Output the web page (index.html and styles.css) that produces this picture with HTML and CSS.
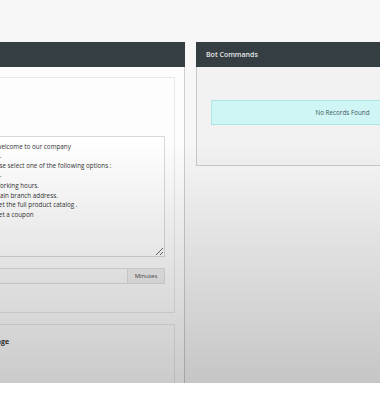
FILE: index.html
```html
<!DOCTYPE html>
<html>
<head>
<meta charset="utf-8">
<link rel="stylesheet" href="styles.css">
</head>
<body>
<div class="frame">
  <div class="row">
    <section class="panel panel-left">
      <div class="panel-head"><span>Auto Reply</span></div>
      <div class="panel-body">
        <div class="card card-form">
          <textarea class="msg" readonly>Hi, welcome to our company
-------
Please select one of the following options :
-------
1- Working hours.
2- Main branch address.
3- Get the full product catalog .
4- Get a coupon</textarea>
          <div class="input-group">
            <input class="input" type="text" value="">
            <span class="addon">Minutes</span>
          </div>
        </div>
        <div class="card card-second">
          <h4 class="card-title">Message</h4>
        </div>
      </div>
    </section>
    <section class="panel panel-right">
      <div class="panel-head"><span>Bot Commands</span></div>
      <div class="panel-body">
        <div class="alert">No Records Found</div>
      </div>
    </section>
  </div>
  <div class="shade"></div>
</div>
</body>
</html>
```
FILE: styles.css
```css
* { box-sizing: border-box; }
html, body {
  margin: 0;
  padding: 0;
  width: 380px;
  height: 420px;
  overflow: hidden;
  background: #ffffff;
  font-family: "Open Sans", "DejaVu Sans", sans-serif;
}
.frame {
  position: relative;
  height: 383px;
  overflow: hidden;
  background: #f7f7f7;
}
.row {
  display: flex;
  gap: 11px;
  margin-left: -41px;
  padding-top: 42px;
  align-items: flex-start;
}
.panel { flex: none; }
.panel-left { width: 226px; }
.panel-right { width: 292px; }
.panel-head {
  height: 25px;
  background: #353e43;
  color: #e4e7e8;
  font-size: 7px;
  font-weight: 600;
  display: flex;
  align-items: center;
  padding-left: 10px;
}
.panel-left .panel-head span { visibility: hidden; }
.panel-left .panel-body {
  background: #fdfdfd;
  border-right: 1px solid #cdcdcd;
  padding: 10px 9px 0 10px;
  height: 360px;
}
.card {
  border: 1px solid #e7e7e7;
  background: #fdfdfd;
}
.card-form {
  padding: 58px 9px 28px 9px;
}
.msg {
  display: block;
  width: 100%;
  height: 121px;
  margin: 0;
  padding: 5px 6px 5px 7px;
  border: 1px solid #d9d9d9;
  background: #fff;
  font-family: "Open Sans", "DejaVu Sans", sans-serif;
  font-size: 6.3px;
  line-height: 9.7px;
  color: #333;
  resize: vertical;
  outline: none;
}
.input-group {
  display: flex;
  margin-top: 11px;
  height: 16px;
}
.input {
  flex: 1;
  min-width: 0;
  height: 16px;
  border: 1px solid #dedede;
  border-right: none;
  background: #fafafa;
  margin: 0;
  padding: 0;
}
.addon {
  width: 38px;
  height: 16px;
  border: 1px solid #dedede;
  background: #efefef;
  font-size: 6px;
  color: #444;
  display: flex;
  align-items: center;
  justify-content: center;
}
.card-second {
  margin-top: 11px;
  padding: 12px 9px 40px 9px;
}
.card-title {
  margin: 0;
  font-size: 7px;
  line-height: 10px;
  font-weight: 700;
  color: #333;
}
.panel-right .panel-body {
  background: #f2f2f2;
  border-left: 1px solid #c9c9c9;
  border-bottom: 1px solid #c9c9c9;
  padding: 33px 14px 40px 14px;
}
.alert {
  height: 25px;
  background: #cff5f5;
  border: 1px solid #ace6e6;
  color: #3d5a5c;
  font-size: 6.3px;
  display: flex;
  align-items: center;
  justify-content: center;
}
.shade {
  position: absolute;
  inset: 0;
  pointer-events: none;
  background: linear-gradient(to bottom, rgba(0,0,0,0) 0px, rgba(0,0,0,0) 140px, rgba(0,0,0,0.08) 230px, rgba(0,0,0,0.2) 383px);
}
```
